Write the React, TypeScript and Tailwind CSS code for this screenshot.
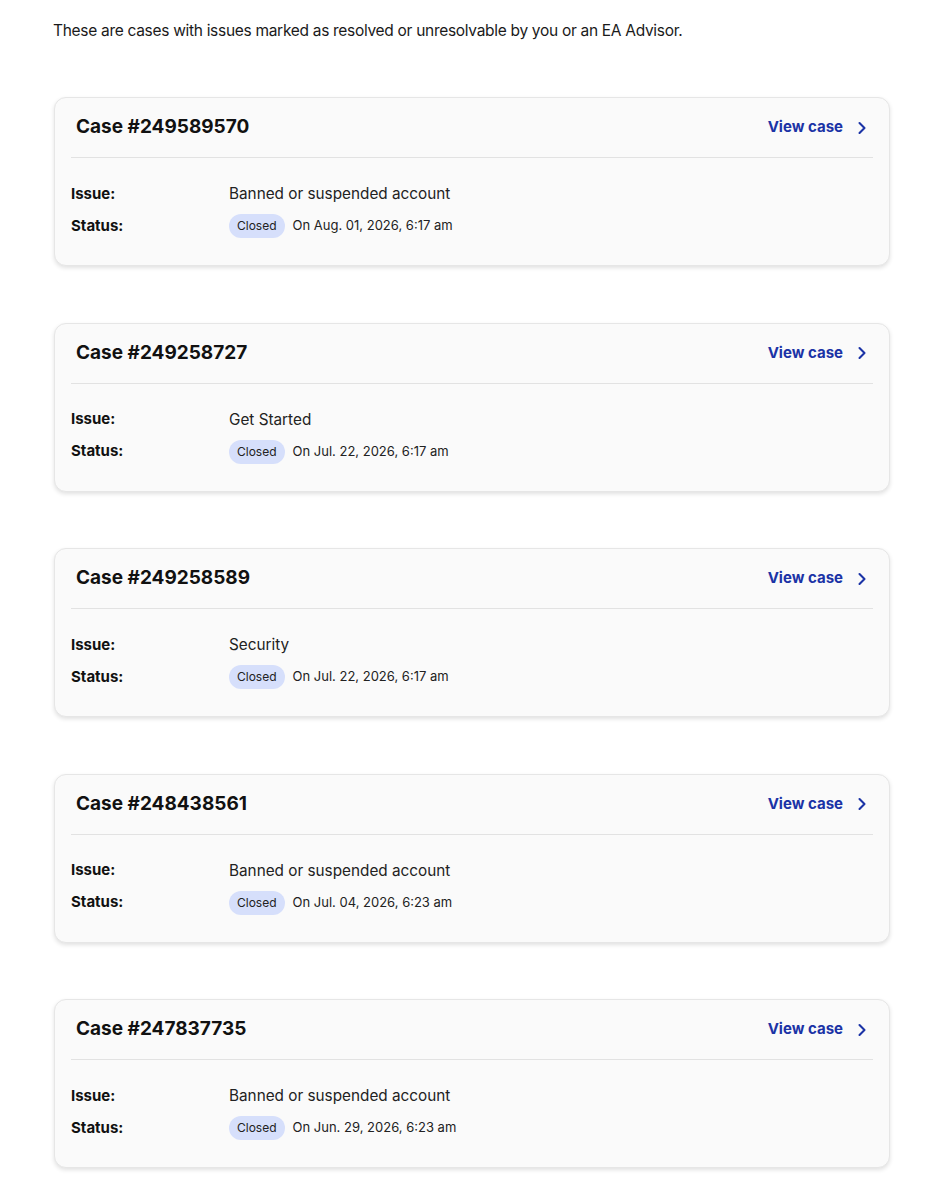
import { ChevronRight } from "lucide-react";

type Case = { id: string; issue: string; date: string };

const CASES: Case[] = [
  { id: "249589570", issue: "Banned or suspended account", date: "On Aug. 01, 2026, 6:17 am" },
  { id: "249258727", issue: "Get Started", date: "On Jul. 22, 2026, 6:17 am" },
  { id: "249258589", issue: "Security", date: "On Jul. 22, 2026, 6:17 am" },
  { id: "248438561", issue: "Banned or suspended account", date: "On Jul. 04, 2026, 6:23 am" },
  { id: "247837735", issue: "Banned or suspended account", date: "On Jun. 29, 2026, 6:23 am" },
];

function CaseCard({ c }: { c: Case }) {
  return (
    <div className="rounded-[12px] border border-[#e6e6e6] bg-[#fafafa] shadow-[0_2px_4px_rgba(0,0,0,0.12)]">
      <div className="flex h-[59px] items-center justify-between pl-[21px] pr-[17px]">
        <h2 className="text-[19px] font-bold text-[#111]">Case #{c.id}</h2>
        <a href="#" className="flex items-center gap-[9px] text-[15px] font-bold text-[#1b33a6]">
          View case
          <ChevronRight className="h-[20px] w-[20px]" strokeWidth={2.5} />
        </a>
      </div>
      <div className="mx-4 h-px bg-[#e2e2e2]" />
      <div className="flex flex-col gap-2 px-4 pb-[27px] pt-[24px]">
        <div className="flex items-center">
          <span className="w-[158px] text-[15px] font-bold text-[#111]">Issue:</span>
          <span className="text-[15.3px] leading-6 text-[#222]">{c.issue}</span>
        </div>
        <div className="flex h-6 items-center">
          <span className="w-[158px] text-[15px] font-bold text-[#111]">Status:</span>
          <span className="flex h-6 items-center rounded-full bg-[#d6dffb] px-2 text-[12px] text-[#222]">Closed</span>
          <span className="ml-2 text-[13px] text-[#222]">{c.date}</span>
        </div>
      </div>
    </div>
  );
}

export default function App() {
  return (
    <div className="min-h-screen bg-white font-['Inter',sans-serif] text-[#111]">
      <div className="pl-[54px] pr-[49px] pt-[19px]">
        <p className="-ml-px text-[15.5px] leading-6 tracking-[-0.3px] text-[#1a1a1a]">
          These are cases with issues marked as resolved or unresolvable by you or an EA Advisor.
        </p>
        <div className="mt-[54px] flex flex-col gap-[56.5px]">
          {CASES.map((c) => (
            <CaseCard key={c.id} c={c} />
          ))}
        </div>
      </div>
    </div>
  );
}
